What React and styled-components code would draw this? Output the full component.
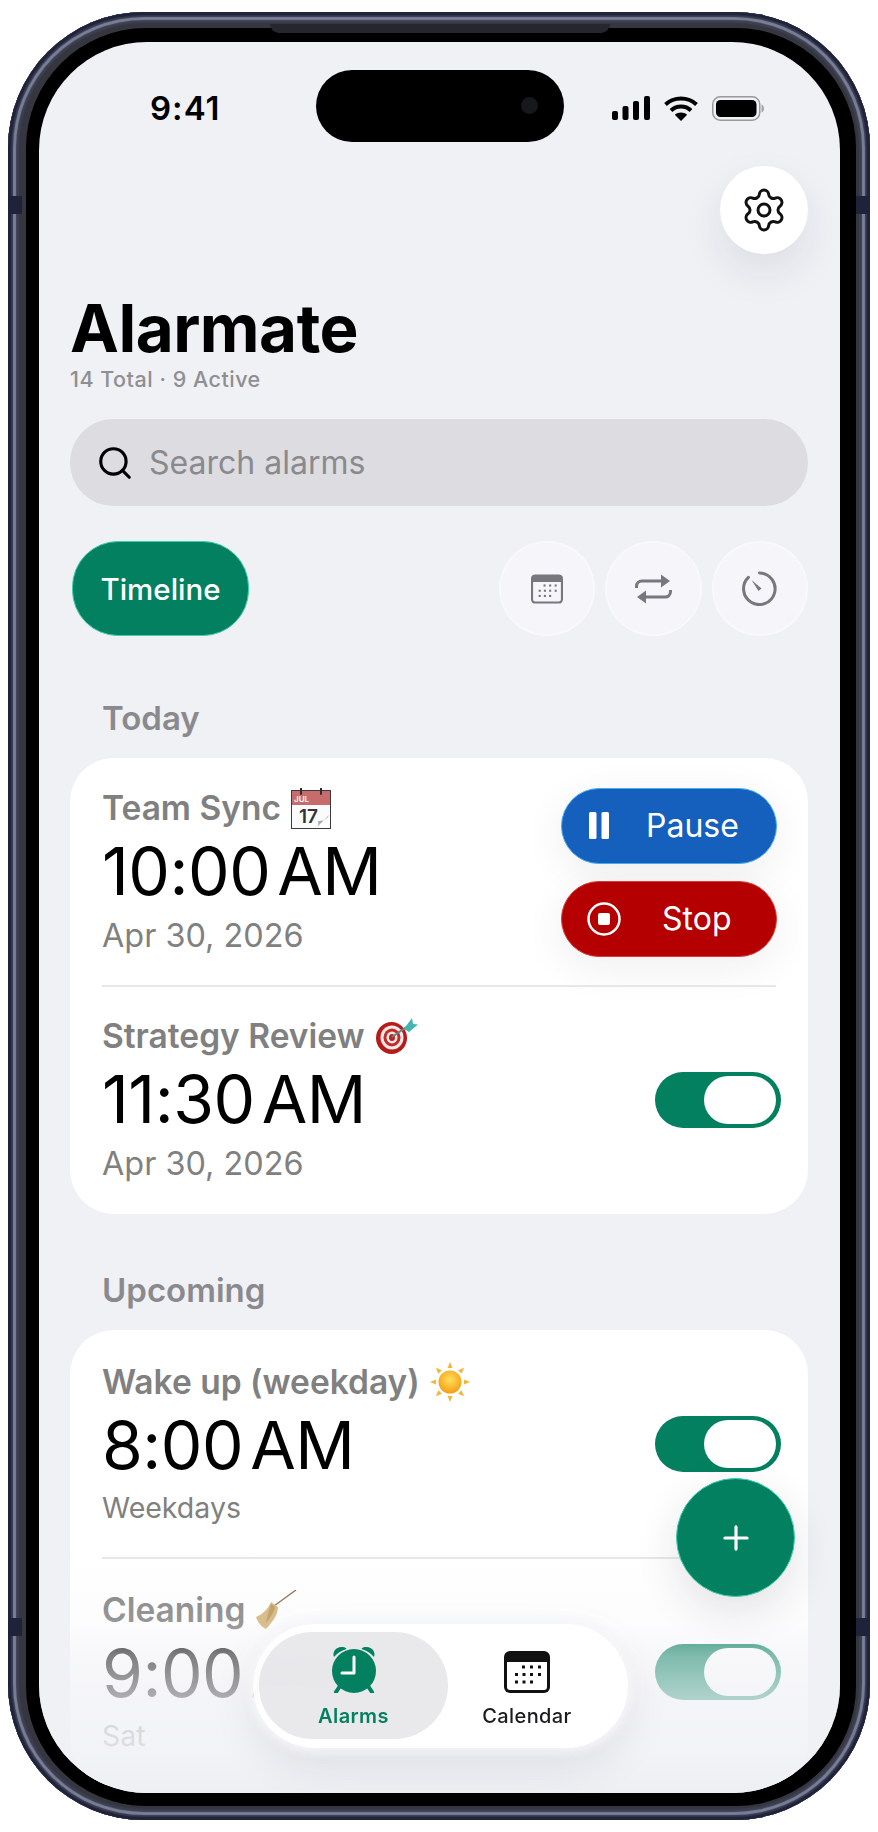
import styled, { createGlobalStyle } from 'styled-components';
import { Settings, Search, Plus } from 'lucide-react';

const GlobalStyle = createGlobalStyle`
  html, body {
    margin: 0;
    padding: 0;
    background: #fff;
  }

  body {
    font-family: Inter, "Noto Sans", sans-serif;
    -webkit-font-smoothing: antialiased;
  }
`;

const GREEN = '#03805f';

const Page = styled.div`
  width: 878px;
  height: 1832px;
  padding: 12px 0 0 8px;
  box-sizing: border-box;
  overflow: hidden;
`;

const Frame = styled.div`
  position: relative;
  width: 862px;
  height: 1808px;
  padding: 16px 14px 14px 18px;
  box-sizing: border-box;
  border-radius: 136px;
  background: #34374a;
  box-shadow:
    inset 0 0 1px 3px #20233a,
    inset 0 0 1px 5px #353950,
    inset 0 0 1px 8px #7b8096,
    inset 0 0 1px 11px #3c3f52,
    inset 0 0 0 18px #35363e;
`;

const Antenna = styled.i`
  position: absolute;
  top: ${(p) => p.$top}px;
  ${(p) => (p.$right ? 'right: 0' : 'left: 0')};
  width: 14px;
  height: 18px;
  background: #20223a;
`;

const Speaker = styled.i`
  position: absolute;
  top: 12px;
  left: 262px;
  width: 340px;
  height: 9px;
  border-radius: 0 0 12px 12px;
  background: #26272d;
`;

const Bezel = styled.div`
  height: 100%;
  padding: 14px 16px 13px 13px;
  box-sizing: border-box;
  border-radius: 120px;
  background: #000;
`;

const Screen = styled.div`
  position: relative;
  height: 100%;
  padding: 0 32px 0 31px;
  box-sizing: border-box;
  border-radius: 108px;
  overflow: hidden;
  background: #f0f1f5;
`;

const StatusBar = styled.div`
  display: grid;
  grid-template-columns: 277px 248px 1fr;
  padding-top: 28px;
  margin: 0 -32px 0 -31px;
`;

const Time = styled.div`
  padding: 2px 0 0 111px;
  font-size: 33px;
  line-height: 72px;
  font-weight: 600;
  letter-spacing: 1px;
  color: #000;
  white-space: nowrap;
`;

const Island = styled.div`
  position: relative;
  height: 72px;
  border-radius: 36px;
  background: #000;
`;

const Camera = styled.i`
  position: absolute;
  right: 26px;
  top: 27px;
  width: 17px;
  height: 17px;
  border-radius: 50%;
  background: #17181c;
`;

const StatusIcons = styled.div`
  display: flex;
  align-items: flex-start;
  gap: 14px;
  padding: 26px 0 0 48px;
`;

const SettingsRow = styled.div`
  display: flex;
  justify-content: flex-end;
  margin-top: 22px;
`;

const SettingsButton = styled.button`
  width: 88px;
  height: 88px;
  padding: 0;
  border: 0;
  border-radius: 50%;
  background: #fff;
  color: #111;
  display: flex;
  align-items: center;
  justify-content: center;
  box-shadow: 0 18px 44px rgba(30, 30, 50, 0.09);
`;

const Title = styled.h1`
  margin: 39px 0 0;
  font-size: 65.5px;
  line-height: 72px;
  font-weight: 700;
  letter-spacing: -0.5px;
  color: #000;
`;

const Subtitle = styled.div`
  margin-top: 2px;
  font-size: 21.5px;
  line-height: 24px;
  font-weight: 500;
  letter-spacing: 0.5px;
  color: #8e8e93;
`;

const SearchBar = styled.div`
  display: flex;
  align-items: center;
  gap: 15px;
  height: 87px;
  margin-top: 28px;
  padding-left: 26px;
  border-radius: 44px;
  background: #dcdce1;
  color: #8a8a8e;
  font-size: 32px;
`;

const FilterRow = styled.div`
  display: flex;
  align-items: center;
  gap: 10px;
  margin: 35px 0 0 2px;
`;

const TimelineChip = styled.div`
  width: 177px;
  height: 95px;
  margin-right: auto;
  box-sizing: border-box;
  display: flex;
  align-items: center;
  justify-content: center;
  border: 1.5px solid #3fcfae;
  border-radius: 46px;
  background: ${GREEN};
  color: #fff;
  font-size: 29.5px;
  font-weight: 500;
`;

const IconChip = styled.div`
  width: 96.5px;
  height: 95px;
  box-sizing: border-box;
  display: flex;
  align-items: center;
  justify-content: center;
  border: 2px solid #f9f9fc;
  border-radius: 50%;
  background: #f5f5fa;
`;

const SectionLabel = styled.div`
  margin: ${(p) => p.$top}px 0 20px;
  padding-left: 32px;
  font-size: 33px;
  line-height: 40px;
  font-weight: 600;
  color: #8a8a8e;
`;

const Card = styled.div`
  border-radius: 44px;
  background: #fff;
`;

const Row = styled.div`
  display: flex;
  align-items: center;
  justify-content: space-between;
  height: 228px;
  padding: 0 27px 0 32px;
  box-sizing: border-box;
`;

const Divider = styled.div`
  height: 2px;
  margin: -1px 32px -1px 32px;
  position: relative;
  background: #e7e7ea;
`;

const AlarmText = styled.div`
  padding-top: ${(p) => (p.$compact ? 2 : 0)}px;
`;

const AlarmName = styled.div`
  display: flex;
  align-items: center;
  gap: 10px;
  height: 40px;
  font-size: 33.5px;
  font-weight: 600;
  color: #808080;
`;

const AlarmTime = styled.div`
  margin-top: 7px;
  font-size: 66px;
  line-height: 72px;
  font-weight: 400;
  letter-spacing: -0.5px;
  word-spacing: -11px;
  white-space: nowrap;
  color: #000;
`;

const AlarmSub = styled.div`
  margin-top: ${(p) => (p.$compact ? 7 : 9)}px;
  font-size: ${(p) => (p.$compact ? 28.5 : 32.4)}px;
  line-height: 40px;
  color: #808080;
`;

const Actions = styled.div`
  display: flex;
  flex-direction: column;
  gap: 17px;
  margin-right: 4px;
`;

const ActionButton = styled.button`
  display: flex;
  align-items: center;
  width: 216px;
  height: 76px;
  padding: 0 0 0 ${(p) => p.$pad}px;
  box-sizing: border-box;
  border: 1.5px solid ${(p) => p.$edge};
  border-radius: 38px;
  background: ${(p) => p.$bg};
  color: #fff;
  font-family: inherit;
  font-size: 32px;
  font-weight: 400;
  gap: ${(p) => p.$gap}px;
  box-shadow: 0 10px 44px rgba(30, 30, 50, 0.07);
`;

const Toggle = styled.div`
  flex: none;
  width: 126px;
  height: 56px;
  padding: 4px 5px;
  box-sizing: border-box;
  display: flex;
  justify-content: flex-end;
  border-radius: 28px;
  background: ${GREEN};

  &::after {
    content: '';
    width: 72px;
    height: 48px;
    border-radius: 24px;
    background: #fff;
  }
`;

const Fade = styled.div`
  position: absolute;
  left: 0;
  right: 0;
  bottom: 0;
  height: 250px;
  background: linear-gradient(
    to bottom,
    rgba(240, 241, 245, 0) 0%,
    rgba(240, 241, 245, 0.2) 32%,
    rgba(240, 241, 245, 0.52) 45%,
    rgba(240, 241, 245, 0.72) 62%,
    rgba(240, 241, 245, 0.85) 84%,
    rgba(238, 239, 243, 1) 100%
  );
`;

const Fab = styled.button`
  position: absolute;
  left: 637px;
  top: 1436px;
  width: 119px;
  height: 119px;
  padding: 0;
  border: 1.5px solid #3fcfae;
  border-radius: 50%;
  background: ${GREEN};
  color: #fff;
  display: flex;
  align-items: center;
  justify-content: center;
  box-shadow: 0 14px 44px rgba(30, 30, 50, 0.12);
`;

const TabBar = styled.nav`
  position: absolute;
  left: 214px;
  top: 1582px;
  width: 375px;
  height: 124px;
  padding: 8px 0 9px 6px;
  box-sizing: border-box;
  display: flex;
  border-radius: 62px;
  background: rgba(255, 255, 255, 0.93);
  backdrop-filter: blur(12px);
  box-shadow:
    0 0 10px 5px rgba(244, 245, 248, 0.95),
    0 16px 44px rgba(30, 30, 50, 0.1);
`;

const Tab = styled.div`
  width: ${(p) => (p.$active ? 189 : 158)}px;
  display: flex;
  flex-direction: column;
  align-items: center;
  justify-content: flex-end;
  padding-bottom: 11px;
  box-sizing: border-box;
  border-radius: 54px;
  background: ${(p) => (p.$active ? 'rgba(222, 223, 227, 0.68)' : 'transparent')};
  color: ${(p) => (p.$active ? GREEN : '#1c1c1e')};
  font-size: 20px;
  line-height: 24px;
  font-weight: ${(p) => (p.$active ? 600 : 500)};
  letter-spacing: 0.4px;
`;

const TabIcon = styled.div`
  height: 50px;
  margin-bottom: 11px;
  display: flex;
  align-items: flex-end;
`;

const SignalIcon = () => (
  <svg width="38" height="24" viewBox="0 0 38 24" fill="#000">
    <rect x="0" y="15" width="6" height="9" rx="2" />
    <rect x="10.5" y="10" width="6" height="14" rx="2" />
    <rect x="21" y="5" width="6" height="19" rx="2" />
    <rect x="32" y="0" width="6" height="24" rx="2" />
  </svg>
);

const WifiIcon = () => (
  <svg width="34" height="25" viewBox="0 0 34 25" fill="none" stroke="#000" strokeWidth="4">
    <path d="M1.5 8.5C10 0.5 24 0.5 32.5 8.5" />
    <path d="M7 14.5C12.8 9.3 21.2 9.3 27 14.5" />
    <path d="M17 25L10.8 18.8C14.3 15.7 19.7 15.7 23.2 18.8Z" fill="#000" stroke="none" />
  </svg>
);

const BatteryIcon = () => (
  <svg width="52" height="25" viewBox="0 0 52 25">
    <rect x="0.75" y="0.75" width="47" height="23.5" rx="7.5" fill="none" stroke="#9a9a9c" strokeWidth="1.5" />
    <rect x="4" y="4" width="40.5" height="17" rx="4.5" fill="#000" />
    <path d="M49.5 8.5C51 9 52 10.5 52 12.5C52 14.5 51 16 49.5 16.5Z" fill="#a5a5a7" />
  </svg>
);

const CalendarGlyph = ({ width, height, color, paper }) => (
  <svg width={width} height={height} viewBox="0 0 46 42">
    <rect width="46" height="42" rx="6" fill={color} />
    <path d="M3 11H43V36A3 3 0 0 1 40 39H6A3 3 0 0 1 3 36Z" fill={paper} />
    {[18, 26, 34].map((x) => <rect key={x} x={x} y="14.5" width="3" height="3" fill={color} />)}
    {[11, 18.5, 26, 34].map((x) => <rect key={x} x={x} y="22" width="3" height="3" fill={color} />)}
    {[11, 18.5, 26].map((x) => <rect key={x} x={x} y="29.5" width="3" height="3" fill={color} />)}
  </svg>
);

const RepeatGlyph = () => (
  <svg width="37" height="30" viewBox="0 0 37 30" fill="none" stroke="#77777d" strokeWidth="3">
    <path d="M1.5 14V12.5C1.5 9 4 7 7 7H27" />
    <path d="M26 0.5L35 7L26 13.5Z" fill="#77777d" stroke="none" />
    <path d="M35.5 16V17.5C35.5 21 33 23 30 23H10" />
    <path d="M11 16.5L2 23L11 29.5Z" fill="#77777d" stroke="none" />
  </svg>
);

const TimerGlyph = () => (
  <svg width="35" height="35" viewBox="0 0 35 35" fill="none">
    <path d="M17.5 2A15.75 15.75 0 1 1 6.4 6.4" stroke="#77777d" strokeWidth="3" strokeLinecap="round" />
    <path d="M9.5 9L19.5 17.5L16.5 20Z" fill="#77777d" />
  </svg>
);

const PauseGlyph = () => (
  <svg width="20" height="27" viewBox="0 0 20 27" fill="#fff">
    <rect width="7.5" height="27" rx="1.5" />
    <rect x="12.5" width="7.5" height="27" rx="1.5" />
  </svg>
);

const StopGlyph = () => (
  <svg width="34" height="34" viewBox="0 0 34 34" fill="none">
    <circle cx="17" cy="17" r="15.5" stroke="#fff" strokeWidth="2.5" />
    <rect x="11" y="11" width="12" height="12" rx="2" fill="#fff" />
  </svg>
);

const AlarmGlyph = () => (
  <svg width="44" height="48" viewBox="0 0 44 48" fill={GREEN}>
    <path d="M2 12C0 7 4 1 11 2C13 2.3 14 3 14.5 4C9 5.5 5 8.5 2 12Z" />
    <path d="M42 12C44 7 40 1 33 2C31 2.3 30 3 29.5 4C35 5.5 39 8.5 42 12Z" />
    <circle cx="22" cy="26" r="22" />
    <path d="M8 41L4 47M36 41L40 47" stroke={GREEN} strokeWidth="4" strokeLinecap="round" />
    <path d="M22 12V28H10" fill="none" stroke="#fff" strokeWidth="3" strokeLinejoin="round" strokeLinecap="round" />
  </svg>
);

const CalendarEmoji = () => (
  <svg width="40" height="41" viewBox="0 0 40 41">
    <rect x="0.5" y="2.5" width="39" height="38" fill="#fbfbfb" stroke="#3b3b3b" />
    <rect x="1" y="3" width="38" height="14" fill="#c66c6c" />
    <path d="M10 0V6M30 0V6" stroke="#2d2d2d" strokeWidth="2" strokeLinecap="round" />
    <text x="3" y="14" fontSize="8" fontFamily="Inter, sans-serif" fill="#fff">JUL</text>
    <text x="8" y="35" fontSize="19" fontFamily="Inter, sans-serif" fill="#333">17</text>
    <path d="M39 27L25 40H39Z" fill="#fff" />
    <path d="M38 27C36 32 31 33 27 33C28 36 27 38 25 40Z" fill="#a9a9a9" />
  </svg>
);

const TargetEmoji = () => (
  <svg width="43" height="36" viewBox="0 0 43 36">
    <ellipse cx="16.5" cy="20" rx="15.5" ry="16" fill="#b71c1c" />
    <ellipse cx="17" cy="19.5" rx="11.5" ry="12" fill="#f3e9e6" />
    <ellipse cx="17" cy="19.5" rx="8.5" ry="9" fill="#c52a2a" />
    <ellipse cx="17" cy="19.5" rx="5.5" ry="6" fill="#f3e9e6" />
    <ellipse cx="17" cy="19.5" rx="3" ry="3.5" fill="#bb2222" />
    <path d="M17 19L33 8" stroke="#6f7f80" strokeWidth="2" />
    <path d="M29 11L37 0L38 6L43 6.5L34 14Z" fill="#3fb7ae" />
  </svg>
);

const SunEmoji = () => (
  <svg width="40" height="40" viewBox="0 0 40 40">
    <defs>
      <radialGradient id="sunFill" cx="50%" cy="40%" r="60%">
        <stop offset="0%" stopColor="#ffdf60" />
        <stop offset="100%" stopColor="#f59e14" />
      </radialGradient>
    </defs>
    {[0, 45, 90, 135, 180, 225, 270, 315].map((a) => (
      <path key={a} d="M17.5 6L20 0L22.5 6Z" fill="#f3b63a" transform={`rotate(${a} 20 20)`} />
    ))}
    <circle cx="20" cy="20" r="11.5" fill="url(#sunFill)" />
  </svg>
);

const BroomEmoji = () => (
  <svg width="41" height="40" viewBox="0 0 41 40">
    <path d="M40 0L18 16" stroke="#8a6a4c" strokeWidth="1.5" />
    <path d="M15 12L22 17C22 24 17 32 10 39C6 37 2 33 0 27C7 24 12 19 15 12Z" fill="#d3b273" />
    <path d="M15 14L19 17C18 22 14 28 10 33C11 27 13 20 15 14Z" fill="#b8934f" />
  </svg>
);

const AlarmRow = ({ name, emoji, time, sub, compact, right }) => (
  <Row>
    <AlarmText $compact={compact}>
      <AlarmName>{name} {emoji}</AlarmName>
      <AlarmTime>{time}</AlarmTime>
      <AlarmSub $compact={compact}>{sub}</AlarmSub>
    </AlarmText>
    {right || <Toggle />}
  </Row>
);

const App = () => {
  return (
    <Page>
      <GlobalStyle />
      <Frame>
        <Speaker />
        <Antenna $top={184} />
        <Antenna $top={184} $right />
        <Antenna $top={1606} />
        <Antenna $top={1606} $right />
        <Bezel>
          <Screen>
            <StatusBar>
              <Time>9:41</Time>
              <Island><Camera /></Island>
              <StatusIcons>
                <SignalIcon />
                <WifiIcon />
                <BatteryIcon />
              </StatusIcons>
            </StatusBar>

            <SettingsRow>
              <SettingsButton>
                <Settings size={48} strokeWidth={1.5} />
              </SettingsButton>
            </SettingsRow>

            <Title>Alarmate</Title>
            <Subtitle>14 Total · 9 Active</Subtitle>

            <SearchBar>
              <Search size={38} color="#000" strokeWidth={2} />
              Search alarms
            </SearchBar>

            <FilterRow>
              <TimelineChip>Timeline</TimelineChip>
              <IconChip><CalendarGlyph width={32} height={30} color="#77777d" paper="#f5f5fa" /></IconChip>
              <IconChip><RepeatGlyph /></IconChip>
              <IconChip><TimerGlyph /></IconChip>
            </FilterRow>

            <SectionLabel $top={62}>Today</SectionLabel>
            <Card>
              <AlarmRow
                name="Team Sync"
                emoji={<CalendarEmoji />}
                time="10:00 AM"
                sub="Apr 30, 2026"
                right={
                  <Actions>
                    <ActionButton $bg="#1560bd" $edge="#45aef0" $pad={27} $gap={37}>
                      <PauseGlyph />
                      Pause
                    </ActionButton>
                    <ActionButton $bg="#b40000" $edge="#d93a3a" $pad={25} $gap={41}>
                      <StopGlyph />
                      Stop
                    </ActionButton>
                  </Actions>
                }
              />
              <Divider />
              <AlarmRow name="Strategy Review" emoji={<TargetEmoji />} time="11:30 AM" sub="Apr 30, 2026" />
            </Card>

            <SectionLabel $top={56}>Upcoming</SectionLabel>
            <Card>
              <AlarmRow compact name="Wake up (weekday)" emoji={<SunEmoji />} time="8:00 AM" sub="Weekdays" />
              <Divider />
              <AlarmRow compact name="Cleaning" emoji={<BroomEmoji />} time="9:00 AM" sub="Sat" />
            </Card>

            <Fade />

            <Fab>
              <Plus size={38} strokeWidth={2} />
            </Fab>

            <TabBar>
              <Tab $active>
                <TabIcon><AlarmGlyph /></TabIcon>
                Alarms
              </Tab>
              <Tab>
                <TabIcon><CalendarGlyph width={46} height={42} color="#111" paper="#fff" /></TabIcon>
                Calendar
              </Tab>
            </TabBar>
          </Screen>
        </Bezel>
      </Frame>
    </Page>
  );
};

export default App;
